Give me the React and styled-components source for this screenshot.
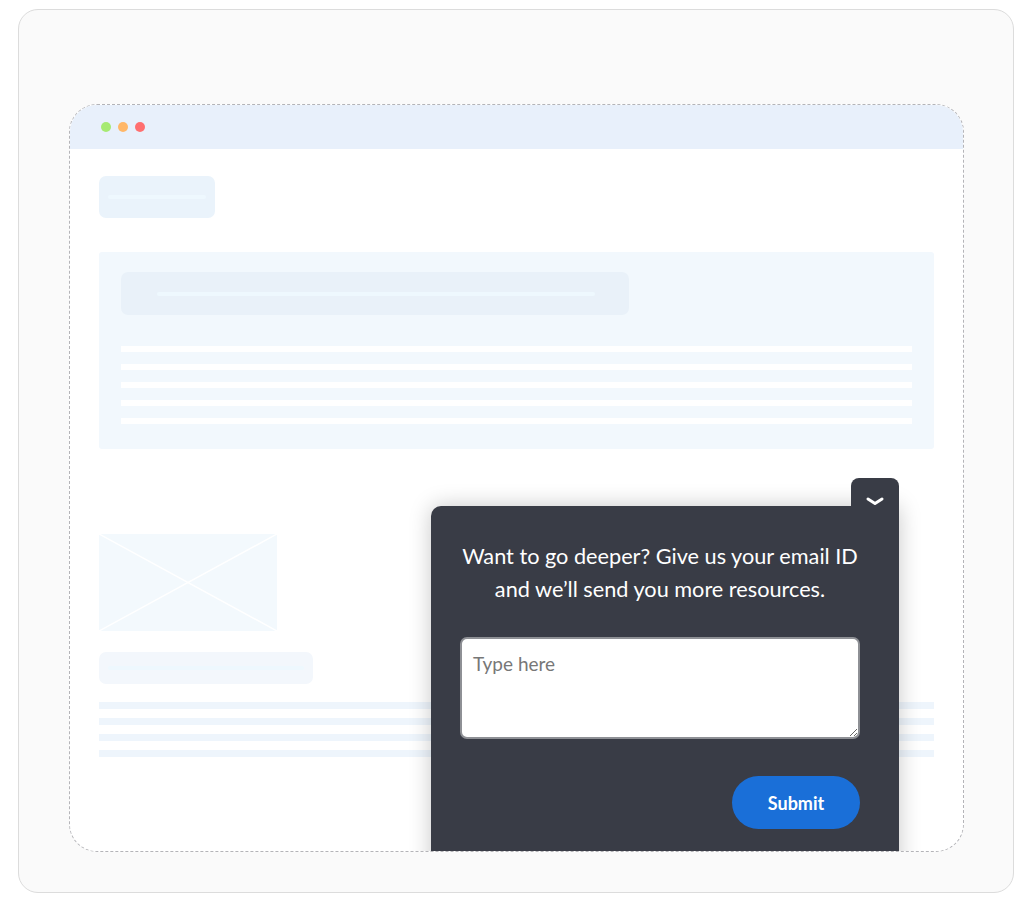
import React from 'react'
import styled, { createGlobalStyle } from 'styled-components'

const Global = createGlobalStyle`
  body {
    margin: 0;
    background: #fff;
    font-family: "Lato", "Liberation Sans", sans-serif;
  }
`

export default function App() {
  return (
    <>
      <Global />
      <Page>
        <Card>
          <Browser>
            <TopBar>
              <Dot color="#a6ea72" />
              <Dot color="#ffb768" />
              <Dot color="#ff6f6f" />
            </TopBar>
            <Body>
              <Pill w={116} h={42} bg="#eaf3fb">
                <PillLine />
              </Pill>
              <Hero>
                <HeroBar>
                  <PillLine />
                </HeroBar>
                <Stripes>
                  {[0, 1, 2, 3, 4].map(i => <Stripe key={i} />)}
                </Stripes>
              </Hero>
              <Picture>
                <svg width="178" height="97" viewBox="0 0 178 97" preserveAspectRatio="none">
                  <line x1="0" y1="0" x2="178" y2="97" stroke="#fff" strokeWidth="1.5" />
                  <line x1="178" y1="0" x2="0" y2="97" stroke="#fff" strokeWidth="1.5" />
                </svg>
              </Picture>
              <Pill w={214} h={32} bg="#f3f7fc" top={21}>
                <PillLine />
              </Pill>
              <Lines>
                {[0, 1, 2, 3].map(i => <Line key={i} />)}
              </Lines>
            </Body>
            <Popup>
              <Toggle>
                <svg width="18" height="10" viewBox="0 0 18 10">
                  <path d="M2 2 L9 6.5 L16 2" fill="none" stroke="#fff" strokeWidth="3" strokeLinecap="round" strokeLinejoin="round" />
                </svg>
              </Toggle>
              <Prompt>
                Want to go deeper? Give us your email ID<br />
                and we’ll send you more resources.
              </Prompt>
              <Input placeholder="Type here" />
              <Actions>
                <Submit>Submit</Submit>
              </Actions>
            </Popup>
          </Browser>
        </Card>
      </Page>
    </>
  )
}

const Page = styled.div`
  width: 1024px;
  height: 905px;
  padding: 9px 10px 0 18px;
  box-sizing: border-box;
`

const Card = styled.div`
  width: 996px;
  height: 884px;
  box-sizing: border-box;
  border: 1px solid #dcdcdc;
  border-radius: 20px;
  background: #fafafa;
  padding: 94px 50px 0 50px;
`

const Browser = styled.div`
  position: relative;
  width: 895px;
  height: 748px;
  box-sizing: border-box;
  border: 1.5px dashed #b4b4b8;
  border-radius: 28px;
  background: #fff;
  overflow: hidden;
`

const TopBar = styled.div`
  height: 44px;
  background: #e8f0fb;
  display: flex;
  align-items: center;
  gap: 7px;
  padding-left: 31px;
`

const Dot = styled.span`
  width: 10px;
  height: 10px;
  border-radius: 50%;
  background: ${p => p.color};
`

const Body = styled.div`
  padding: 27px 29px 0 29px;
  display: flex;
  flex-direction: column;
`

const Pill = styled.div`
  width: ${p => p.w}px;
  height: ${p => p.h}px;
  margin-top: ${p => p.top || 0}px;
  background: ${p => p.bg};
  border-radius: 7px;
  display: flex;
  align-items: center;
  padding: 0 9px;
  box-sizing: border-box;
`

const PillLine = styled.div`
  flex: 1;
  height: 4px;
  border-radius: 2px;
  background: #eef8fe;
`

const Hero = styled.div`
  margin-top: 34px;
  height: 197px;
  box-sizing: border-box;
  background: #f2f8fd;
  border-radius: 3px;
  padding: 20px 22px 0 22px;
`

const HeroBar = styled.div`
  width: 508px;
  height: 43px;
  box-sizing: border-box;
  border-radius: 7px;
  background: #e9f1f9;
  display: flex;
  align-items: center;
  padding: 0 34px 0 36px;
`

const Stripes = styled.div`
  margin-top: 31px;
  display: flex;
  flex-direction: column;
  gap: 12px;
`

const Stripe = styled.div`
  height: 6px;
  background: #fff;
`

const Picture = styled.div`
  margin-top: 85px;
  width: 178px;
  height: 97px;
  background: #f3f9fd;
  svg { display: block; }
`

const Lines = styled.div`
  margin-top: 18px;
  display: flex;
  flex-direction: column;
  gap: 9px;
`

const Line = styled.div`
  height: 7px;
  background: #eef5fc;
`

const Popup = styled.div`
  position: absolute;
  left: 361px;
  top: 401px;
  width: 468px;
  height: 400px;
  box-sizing: border-box;
  background: #393c46;
  border-radius: 10px 0 0 0;
  box-shadow: 0 0 22px rgba(0, 0, 0, 0.22);
  padding: 34px 39px 0 29px;
  display: flex;
  flex-direction: column;
`

const Toggle = styled.button`
  position: absolute;
  right: 0;
  top: -28px;
  width: 48px;
  height: 30px;
  border: none;
  border-radius: 8px 8px 0 0;
  background: #393c46;
  display: flex;
  align-items: center;
  justify-content: center;
  padding: 17px 0 0;
`

const Prompt = styled.p`
  margin: 0;
  color: #fff;
  font-size: 21.7px;
  line-height: 33px;
  text-align: center;
  white-space: nowrap;
`

const Input = styled.textarea`
  margin-top: 31px;
  width: 400px;
  height: 102px;
  box-sizing: border-box;
  border: 2.5px solid #8e9095;
  border-radius: 7px;
  padding: 13px 11px;
  font-family: "Lato", sans-serif;
  font-size: 19px;
  color: #333;
  &::placeholder { color: #777; }
`

const Actions = styled.div`
  margin-top: 37px;
  display: flex;
  justify-content: flex-end;
`

const Submit = styled.button`
  width: 128px;
  height: 53px;
  border: none;
  border-radius: 27px;
  background: #1a6fd8;
  color: #fff;
  font-family: "Lato", sans-serif;
  font-weight: 700;
  font-size: 18px;
`
